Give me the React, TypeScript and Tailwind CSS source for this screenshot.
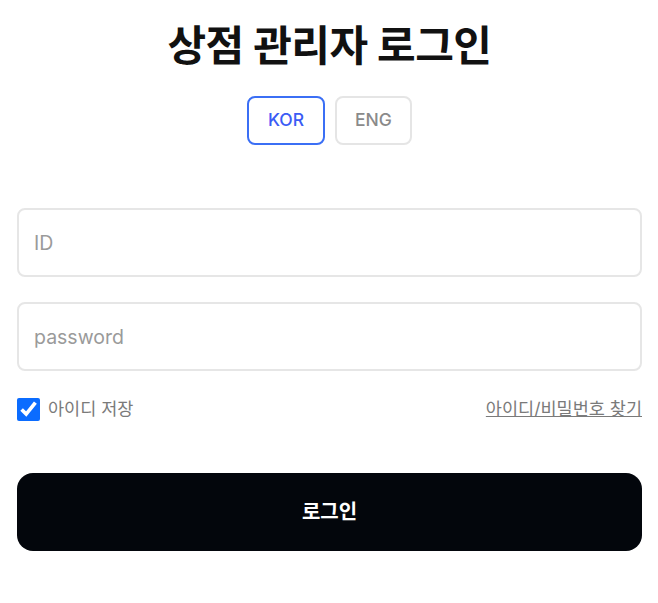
import React, { useState } from 'react';

const App: React.FC = () => {
  const [lang, setLang] = useState<'KOR' | 'ENG'>('KOR');
  const [saveId, setSaveId] = useState(true);

  return (
    <div
      className="min-h-screen bg-white px-[17px] pt-[18px]"
      style={{ fontFamily: 'Inter, "Noto Sans CJK KR", sans-serif' }}
    >
      <div className="w-[625px] flex flex-col">
        <h1 className="text-center text-[42px] leading-[56px] font-bold text-[#111111] tracking-[-0.5px]">
          상점 관리자 로그인
        </h1>

        <div className="flex justify-center gap-[10px] mt-[22px]">
          {(['KOR', 'ENG'] as const).map(l => (
            <button
              key={l}
              onClick={() => setLang(l)}
              className={
                lang === l
                  ? 'w-[78px] h-[49px] rounded-lg border-2 border-[#3b6ff5] text-[#3b5bf5] text-[17.5px] font-medium'
                  : 'w-[77px] h-[49px] rounded-lg border-2 border-[#e5e5e5] text-[#8a8a8a] text-[17.5px] font-medium'
              }
            >
              {l}
            </button>
          ))}
        </div>

        <div className="flex flex-col gap-[25px] mt-[63px]">
          <input
            type="text"
            placeholder="ID"
            className="h-[69px] rounded-lg border-2 border-[#e6e6e6] px-[15px] text-[19.5px] placeholder:text-[#9a9a9a] focus:outline-none"
          />
          <input
            type="password"
            placeholder="password"
            className="h-[69px] rounded-lg border-2 border-[#e6e6e6] px-[15px] text-[19.5px] placeholder:text-[#9a9a9a] focus:outline-none"
          />
        </div>

        <div className="flex items-center justify-between mt-[25px]">
          <label className="flex items-center gap-[8px] text-[17.5px] text-[#7a7a7a]">
            <input
              type="checkbox"
              checked={saveId}
              onChange={e => setSaveId(e.target.checked)}
              className="w-[23px] h-[23px] accent-[#0b6cff]"
            />
            아이디 저장
          </label>
          <a href="#" className="text-[17.5px] text-[#7a7a7a] underline">
            아이디/비밀번호 찾기
          </a>
        </div>

        <button className="mt-[51px] h-[78px] rounded-2xl bg-[#03060c] text-white text-[20px] font-bold">
          로그인
        </button>
      </div>
    </div>
  );
};

export default App;
